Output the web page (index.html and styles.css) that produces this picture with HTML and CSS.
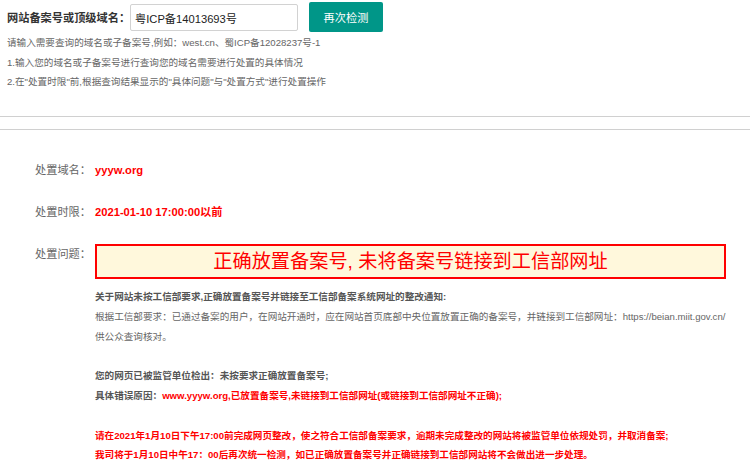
FILE: index.html
```html
<!DOCTYPE html>
<html lang="zh-CN">
<head>
<meta charset="utf-8">
<title>备案号检测</title>
<link rel="stylesheet" href="styles.css">
</head>
<body>
<div class="search">
  <form class="search-bar">
    <label class="search-label" for="q">网站备案号或顶级域名：</label>
    <input class="search-input" id="q" type="text" value="粤ICP备14013693号">
    <button class="search-btn" type="button">再次检测</button>
  </form>
  <p class="hint">请输入需要查询的域名或子备案号,例如：west.cn、蜀ICP备12028237号-1</p>
  <p class="hint">1.输入您的域名或子备案号进行查询您的域名需要进行处置的具体情况</p>
  <p class="hint">2.在"处置时限"前,根据查询结果显示的"具体问题"与"处置方式"进行处置操作</p>
</div>
<div class="result">
  <div class="row">
    <div class="row-label">处置域名：</div>
    <div class="row-value big red bold">yyyw.org</div>
  </div>
  <div class="row">
    <div class="row-label">处置时限：</div>
    <div class="row-value big red bold">2021-01-10 17:00:00以前</div>
  </div>
  <div class="row">
    <div class="row-label">处置问题：</div>
    <div class="row-value">
      <div class="problem">正确放置备案号, 未将备案号链接到工信部网址</div>
      <div class="detail">
        <p class="bold">关于网站未按工信部要求,正确放置备案号并链接至工信部备案系统网址的整改通知:</p>
        <p>根据工信部要求：已通过备案的用户，在网站开通时，应在网站首页底部中央位置放置正确的备案号，并链接到工信部网址：https://beian.miit.gov.cn/供公众查询核对。</p>
        <p class="gap bold">您的网页已被监管单位检出：未按要求正确放置备案号;</p>
        <p class="bold">具体错误原因：<span class="red">www.yyyw.org,已放置备案号,未链接到工信部网址(或链接到工信部网址不正确);</span></p>
        <p class="gap bold red">请在2021年1月10日下午17:00前完成网页整改，使之符合工信部备案要求，逾期未完成整改的网站将被监管单位依规处罚，并取消备案;</p>
        <p class="bold red">我司将于1月10日中午17：00后再次统一检测，如已正确放置备案号并正确链接到工信部网站将不会做出进一步处理。</p>
      </div>
    </div>
  </div>
</div>
</body>
</html>
```
FILE: styles.css
```css
html, body {
  margin: 0;
  padding: 0;
  background: #fff;
}
body {
  font-family: "Liberation Sans", "Noto Sans CJK SC", sans-serif;
  font-size: 9.6px;
  color: #666;
}
p {
  margin: 0;
}
.search {
  padding: 2px 0 0 7px;
  height: 117px;
  border-bottom: 1px solid #d0d0d0;
  box-sizing: border-box;
}
.search-bar {
  display: flex;
  align-items: center;
  height: 30px;
  margin: 0 0 1px;
}
.search-label {
  font-size: 11.2px;
  font-weight: bold;
  color: #333;
  width: 123px;
  white-space: nowrap;
}
.search-input {
  width: 168px;
  height: 27px;
  box-sizing: border-box;
  border: 1px solid #d2d2d2;
  border-radius: 2px;
  padding: 0 4px;
  font-family: inherit;
  font-size: 11.2px;
  color: #222;
  margin: 1px 0 0;
  outline: none;
}
.search-btn {
  margin-left: 11px;
  width: 74px;
  height: 30px;
  border: none;
  border-radius: 2px;
  background: #009688;
  color: #fff;
  font-family: inherit;
  font-size: 11.2px;
  cursor: pointer;
}
.hint {
  line-height: 19.7px;
  color: #666;
}
.result {
  margin-top: 12px;
  border-top: 1px solid #d0d0d0;
  padding: 30px 24px 0 35px;
}
.row {
  display: flex;
  align-items: flex-start;
  line-height: 20px;
  margin-bottom: 22px;
}
.row-label {
  width: 60px;
  flex: none;
  color: #666;
  font-size: 11.2px;
}
.row-value {
  flex: 1;
  min-width: 0;
}
.big {
  font-size: 11.2px;
}
.red {
  color: #f00;
}
.bold {
  font-weight: bold;
}
.problem {
  border: 2px solid #f00;
  background: #fff8dc;
  height: 35px;
  box-sizing: border-box;
  line-height: 31px;
  text-align: center;
  color: #f00;
  font-size: 19.2px;
}
.detail {
  margin-top: 8px;
  line-height: 19.8px;
  color: #666;
}
.detail .bold {
  color: #555;
}
.detail .red,
.detail .bold.red {
  color: #f00;
}
.gap {
  margin-top: 19.8px;
}
```
